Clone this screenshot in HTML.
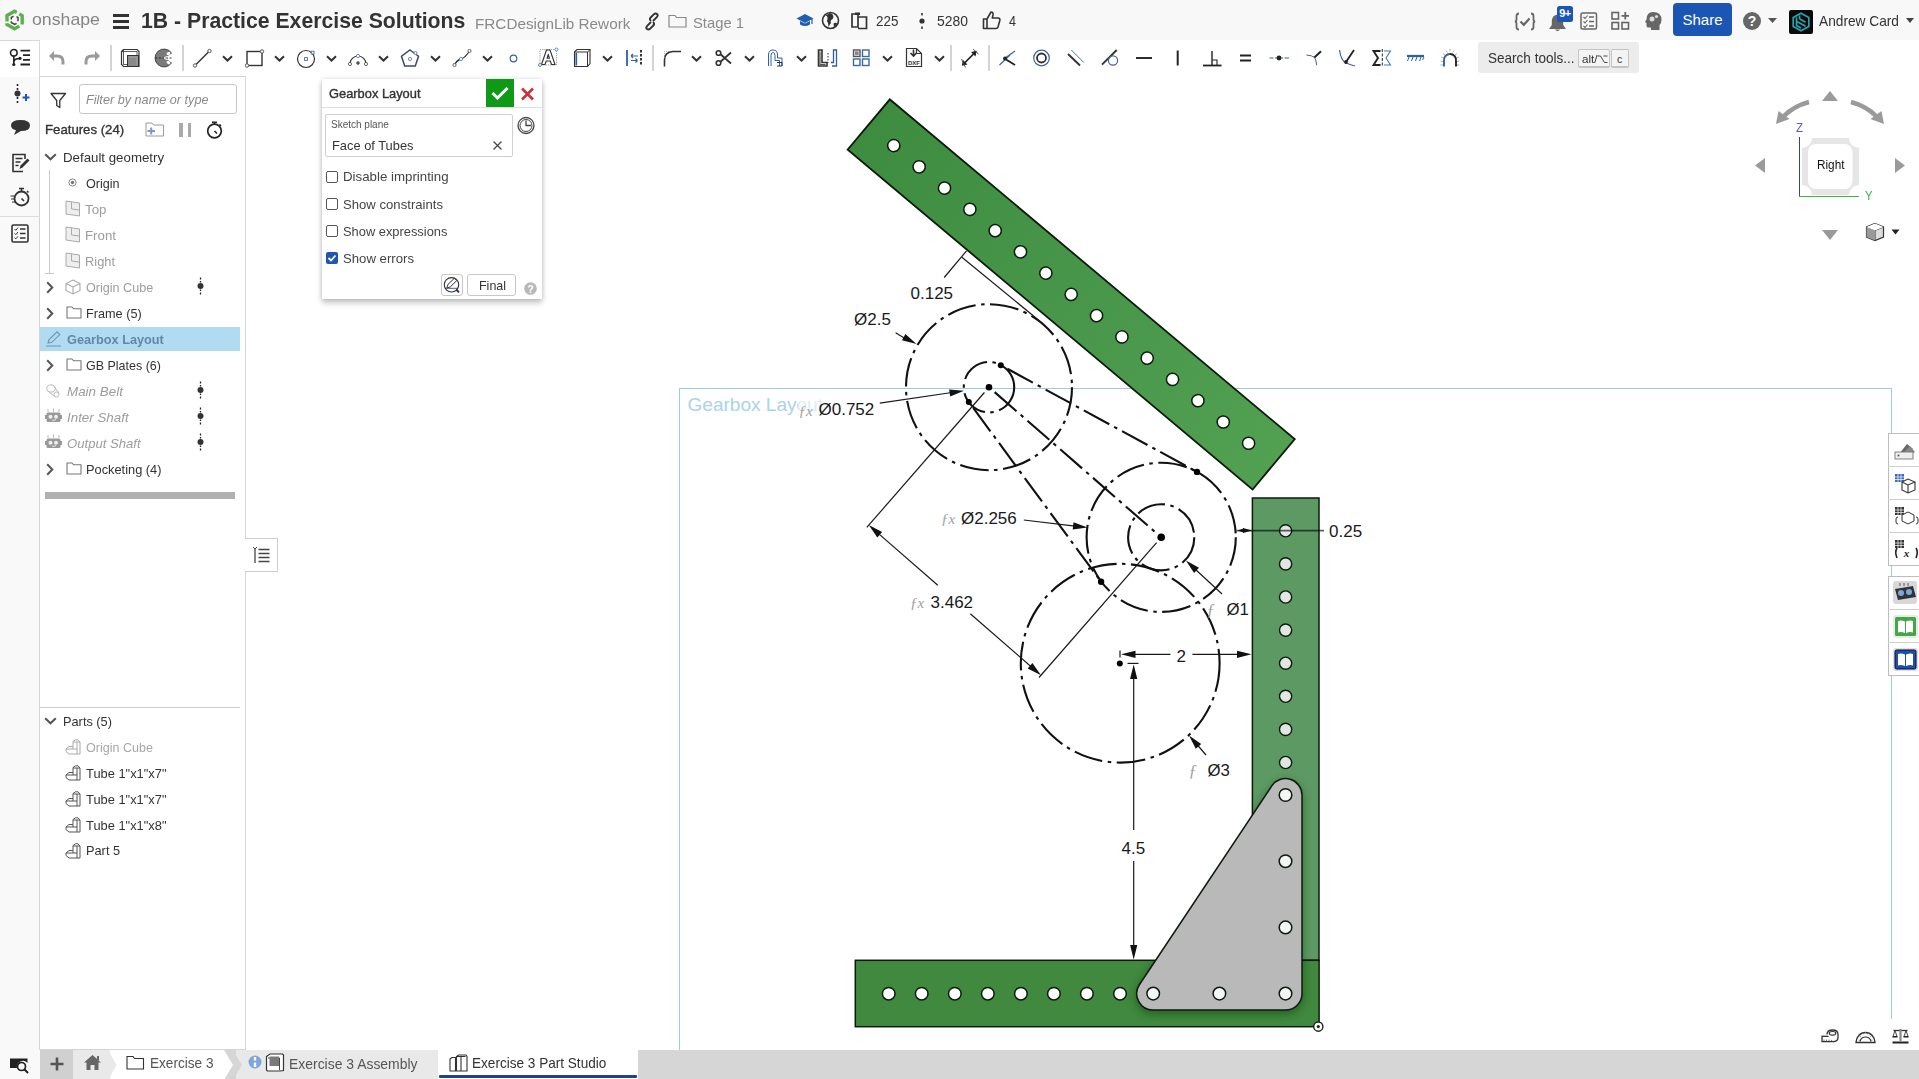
<!DOCTYPE html>
<html><head><meta charset="utf-8">
<style>
html,body{margin:0;padding:0;}
body{width:1919px;height:1079px;overflow:hidden;position:relative;background:#fff;font-family:"Liberation Sans",sans-serif;color:#333;}
.a{position:absolute;}
.t{position:absolute;white-space:nowrap;line-height:1;}
svg{position:absolute;overflow:visible;}
</style></head><body>
<div class="a" style="left:0;top:0;width:1919px;height:40px;background:#f8f8f8;"></div><div class="a" style="left:0;top:39px;width:40px;height:1040px;background:#f9f9f9;"></div><div class="a" style="left:0;top:40px;width:40px;height:37px;background:#fff;border-top:1px solid #d8d8d8;border-right:1px solid #d8d8d8;box-sizing:border-box;"></div><div class="a" style="left:39px;top:76px;width:207px;height:974px;background:#fff;border-left:1px solid #d4d4d4;border-top:1px solid #d4d4d4;border-right:1px solid #d4d4d4;border-bottom:1px solid #d4d4d4;box-sizing:border-box;"></div><div class="a" style="left:40px;top:1050px;width:1879px;height:29px;background:#d6d6d6;"></div><svg style="left:4px;top:8px;" width="22" height="24" viewBox="0 0 22 24"><g fill="none" stroke="#5cb04f" stroke-width="3.4" stroke-linejoin="miter"><path d="M12.8 4.4 L10.6 3.2 L3 7.6 V13.6"/><path d="M15.3 5.9 L18.2 7.6 V16.6"/><path d="M3 15.3 V16.4 L10.6 20.8 L15.3 18.1"/></g><g fill="none" stroke="#444" stroke-width="1.5"><path d="M9.5 8.2 L7.3 9.5 V11.5"/><path d="M12.5 8.6 L14 9.5 V13.3"/><path d="M7.3 13.2 V14.5 L10.6 16.4 L12.6 15.3"/></g></svg><div class="t" style="left:31.5px;top:10.59px;font-size:16.20px;color:#858585;font-weight:normal;font-style:normal;transform:scaleX(1.0940);transform-origin:0 0;">onshape</div><div class="a" style="left:113px;top:14px;width:16px;height:3px;background:#333;"></div><div class="a" style="left:113px;top:20px;width:16px;height:3px;background:#333;"></div><div class="a" style="left:113px;top:26px;width:16px;height:3px;background:#333;"></div><div class="t" style="left:141.0px;top:10.21px;font-size:21.90px;color:#333;font-weight:bold;font-style:normal;transform:scaleX(0.9694);transform-origin:0 0;">1B - Practice Exercise Solutions</div><div class="t" style="left:475.0px;top:15.85px;font-size:15.30px;color:#8a8a8a;font-weight:normal;font-style:normal;transform:scaleX(0.9987);transform-origin:0 0;">FRCDesignLib Rework</div><svg style="left:643px;top:13px;" width="18" height="17" viewBox="0 0 18 17"><g fill="none" stroke="#333" stroke-width="1.9" stroke-linecap="round"><path d="M7.5 9.5 L4.2 12.8 Q2.5 14.5 4 16 Q5.5 17.2 7 15.8 L10.3 12.5 Q11.8 11 10.5 9.5"/><path d="M10.5 7.5 L13.8 4.2 Q15.5 2.5 14 1 Q12.5 -0.2 11 1.2 L7.7 4.5 Q6.2 6 7.5 7.5"/></g></svg><svg style="left:668px;top:13px;" width="19" height="15" viewBox="0 0 19 15"><path d="M1 2.5 H7 L8.5 4.5 H18 V14 H1 Z" fill="none" stroke="#888" stroke-width="1.2"/></svg><div class="t" style="left:692.5px;top:14.90px;font-size:15.00px;color:#8a8a8a;font-weight:normal;font-style:normal;transform:scaleX(0.9863);transform-origin:0 0;">Stage 1</div><svg style="left:796px;top:12px;" width="18" height="16" viewBox="0 0 18 16"><path d="M9 2 L17.5 6.5 L9 11 L0.5 6.5 Z" fill="#1f5fae"/><path d="M4 9 V12.5 Q9 15.5 14 12.5 V9 L9 11.5 Z" fill="#1f5fae"/><path d="M16 7 V12" stroke="#1f5fae" stroke-width="1.2"/></svg><svg style="left:821px;top:11px;" width="19" height="19" viewBox="0 0 19 19"><circle cx="9.5" cy="9.5" r="8" fill="none" stroke="#333" stroke-width="1.6"/><path d="M4.5 4.5 Q7 5 6.5 8 Q5 10 7 12 L7.5 16 Q9 13 10 12 Q9 9.5 11 8.5 Q13 7 12 4 Q11 2.5 9 2 M12.5 12.5 Q14.5 11 16.5 12.5 Q15 15 13 16 Z" fill="#333"/></svg><svg style="left:850px;top:11px;" width="19" height="19" viewBox="0 0 19 19"><path d="M2 3 H8 V16 H2 Z M8 6 H16.5 V17.5 H8" fill="none" stroke="#333" stroke-width="1.7"/><path d="M5 1.5 H10 V4 H5 Z" fill="#333"/></svg><div class="t" style="left:875.5px;top:12.86px;font-size:15.40px;color:#333;font-weight:normal;font-style:normal;transform:scaleX(0.8718);transform-origin:0 0;">225</div><svg style="left:918px;top:12px;" width="8" height="18" viewBox="0 0 8 18"><circle cx="4" cy="9" r="2.6" fill="#333"/><rect x="3.2" y="1" width="1.6" height="2.4" fill="#333"/><rect x="3.2" y="14.5" width="1.6" height="2.4" fill="#333"/></svg><div class="t" style="left:937.3px;top:12.86px;font-size:15.40px;color:#333;font-weight:normal;font-style:normal;transform:scaleX(0.9048);transform-origin:0 0;">5280</div><svg style="left:982px;top:10px;" width="19" height="20" viewBox="0 0 19 20"><path d="M1.5 9 H5 V18.5 H1.5 Z M5 9 L9 2 Q11.5 2 11 5 L10.3 8 H16.5 Q18.3 8.5 17.8 10.5 L16 17 Q15.5 18.5 14 18.5 H5" fill="none" stroke="#333" stroke-width="1.6" stroke-linejoin="round"/></svg><div class="t" style="left:1008.8px;top:12.86px;font-size:15.40px;color:#333;font-weight:normal;font-style:normal;transform:scaleX(0.8173);transform-origin:0 0;">4</div><svg style="left:1514px;top:12px;" width="22" height="19" viewBox="0 0 22 19"><path d="M5 1.5 Q2.5 1.5 2.5 4 V7.5 Q2.5 9.5 0.8 9.5 Q2.5 9.5 2.5 11.5 V15 Q2.5 17.5 5 17.5 M17 1.5 Q19.5 1.5 19.5 4 V7.5 Q19.5 9.5 21.2 9.5 Q19.5 9.5 19.5 11.5 V15 Q19.5 17.5 17 17.5" fill="none" stroke="#666" stroke-width="1.8"/><path d="M6.5 9.5 L9.8 12.8 L15.5 6.5" fill="none" stroke="#666" stroke-width="2.2"/></svg><svg style="left:1548px;top:13px;" width="19" height="18" viewBox="0 0 19 18"><path d="M9.5 1.5 Q4 2 3.8 8.5 V12 L1 16 H18 L15.2 12 V8.5 Q15 2 9.5 1.5 Z M7 16.5 Q9.5 19.5 12 16.5 Z" fill="#666"/></svg><div class="a" style="left:1557px;top:6px;width:16px;height:16px;background:#1b55b5;border-radius:2.5px;color:#fff;font-size:11px;font-weight:bold;text-align:center;line-height:15px;letter-spacing:-0.5px;">9+</div><svg style="left:1580px;top:12px;" width="18" height="18" viewBox="0 0 18 18"><rect x="1" y="1" width="15.5" height="16" rx="1.5" fill="none" stroke="#666" stroke-width="1.5"/><path d="M3.5 5 l1.5 1.5 2.5-3 M3.5 9.5 l1.5 1.5 2.5-3 M3.5 14 l1.5 1.5 2.5-3" fill="none" stroke="#666" stroke-width="1.1"/><path d="M9 5 H14 M9 9.5 H14 M9 14 H14" stroke="#666" stroke-width="1.5"/></svg><svg style="left:1611px;top:11px;" width="20" height="20" viewBox="0 0 20 20"><g fill="none" stroke="#666" stroke-width="1.6"><rect x="1" y="1.5" width="6.5" height="6.5"/><rect x="1" y="11.5" width="6.5" height="6.5"/><rect x="11" y="11.5" width="6.5" height="6.5"/></g><path d="M14.3 1 V8.5 M10.5 4.8 H18" stroke="#666" stroke-width="1.8"/></svg><svg style="left:1644px;top:11px;" width="19" height="20" viewBox="0 0 19 20"><path d="M9 1 Q17.5 1 17.5 9 Q17.5 12 15.5 14 V19 H7 V16.5 H4 Q2.5 16.5 2.5 14.5 V12 L1 11 L2.5 8.5 Q2.5 1 9 1 Z" fill="#666"/><circle cx="8" cy="8" r="2.5" fill="#ddd"/><circle cx="12.5" cy="5.5" r="1.6" fill="#ddd"/></svg><div class="a" style="left:1673px;top:3px;width:59px;height:33px;background:#1c56b4;border-radius:4px;color:#fff;font-size:15px;text-align:center;line-height:33px;">Share</div><svg style="left:1742px;top:11px;" width="20" height="20" viewBox="0 0 20 20"><circle cx="10" cy="10" r="9" fill="#666"/><text x="10" y="15" font-size="14" font-weight="bold" text-anchor="middle" fill="#fff" font-family="Liberation Sans, sans-serif">?</text></svg><svg style="left:1768px;top:18px;" width="9" height="5" viewBox="0 0 9 5"><path d="M0 0 H9 L4.5 5 Z" fill="#555"/></svg><svg style="left:1789px;top:10px;" width="24" height="24" viewBox="0 0 24 24"><rect width="24" height="24" rx="2" fill="#0a0a0a"/><g fill="none" stroke="#2aa3b0" stroke-width="1.7"><path d="M12 3.2 L19.8 7.5 V16.5 L12 20.8 L4.2 16.5 V7.5 Z"/><path d="M7.5 7.2 V15.5 L12 18 M7.5 11.2 L16.5 16.3 M10.5 8.8 L16.5 12.2 M10.5 8.8 V5.5"/></g></svg><div class="t" style="left:1819.0px;top:13.60px;font-size:14.30px;color:#333;font-weight:normal;font-style:normal;transform:scaleX(0.9586);transform-origin:0 0;">Andrew Card</div><svg style="left:1906px;top:17.5px;" width="8" height="5" viewBox="0 0 8 5"><path d="M0 0 H8 L4 5 Z" fill="#444"/></svg><svg style="left:9px;top:48px;" width="22" height="20" viewBox="0 0 22 20"><circle cx="4.8" cy="4.8" r="3.3" fill="none" stroke="#222" stroke-width="1.6"/><path d="M4.8 8 V16.5 M4.8 14 Q5 10.5 11 10.5" fill="none" stroke="#222" stroke-width="1.6"/><circle cx="4.8" cy="16.5" r="1.6" fill="#222"/><circle cx="11" cy="10.3" r="1.6" fill="#222"/><path d="M11.5 2.7 H21 M14 7.2 H21 M14 11.8 H21 M11.5 16.5 H21" stroke="#222" stroke-width="1.8"/></svg><svg style="left:48px;top:49px;" width="17" height="17" viewBox="0 0 17 17"><path d="M6 2 L1 7 L6 12 Z" fill="#9a9a9a"/><path d="M4 7 H9 Q15 7 15 12.5 V15.5" fill="none" stroke="#9a9a9a" stroke-width="3"/></svg><svg style="left:84px;top:49px;" width="17" height="17" viewBox="0 0 17 17"><path d="M11 2 L16 7 L11 12 Z" fill="#9a9a9a"/><path d="M13 7 H8 Q2 7 2 12.5 V15.5" fill="none" stroke="#9a9a9a" stroke-width="3"/></svg><div class="a" style="left:110px;top:45px;width:2px;height:26px;background:#d4d4d4;"></div><svg style="left:120px;top:48px;" width="20" height="20" viewBox="0 0 20 20"><path d="M1.5 3.5 L3.5 1.5 H17 L19 3.5 V18.5 H3.5 L1.5 16.5 Z" fill="#fff" stroke="#333" stroke-width="1.2"/><path d="M3.5 1.5 V16.5 H19 M1.5 3.5 H17 V18.5" fill="none" stroke="#333" stroke-width="0.8"/><rect x="7.5" y="7.5" width="11" height="11" fill="#8a8a8a" stroke="#333" stroke-width="1"/><path d="M9 9 H17 V17" fill="none" stroke="#aaa" stroke-width="0.8"/></svg><svg style="left:154px;top:48px;" width="20" height="20" viewBox="0 0 20 20"><path d="M17.5 5 A9 9 0 1 0 17.5 15 L10 10 Z" fill="#7a7a7a" stroke="#333" stroke-width="0.8"/><ellipse cx="14.5" cy="5.5" rx="2" ry="1.5" fill="#fff" transform="rotate(-35 14.5 5.5)"/><ellipse cx="14.5" cy="14.5" rx="2" ry="1.5" fill="#fff" transform="rotate(35 14.5 14.5)"/><path d="M1.5 10 H19" stroke="#222" stroke-width="0.9" stroke-dasharray="2 1.5"/><path d="M10 10 L13 8 M10 10 L13 12" stroke="#fff" stroke-width="1"/></svg><div class="a" style="left:182px;top:45px;width:2px;height:26px;background:#d4d4d4;"></div><svg style="left:192px;top:48px;" width="20" height="20" viewBox="0 0 20 20"><path d="M3 17.5 L17.5 3" stroke="#333" stroke-width="1.4"/><circle cx="3" cy="17.5" r="1.7" fill="#fff" stroke="#555" stroke-width="1"/><circle cx="17.5" cy="3" r="1.7" fill="#fff" stroke="#555" stroke-width="1"/></svg><svg style="left:222px;top:55px;" width="11" height="7" viewBox="0 0 11 7"><path d="M1 1.2 L5.5 5.5 L10 1.2" fill="none" stroke="#333" stroke-width="2"/></svg><svg style="left:244px;top:48px;" width="20" height="20" viewBox="0 0 20 20"><rect x="3" y="3.5" width="15" height="14" fill="none" stroke="#333" stroke-width="1.4"/><circle cx="3" cy="17.5" r="1.7" fill="#fff" stroke="#555" stroke-width="1"/><circle cx="18" cy="3.5" r="1.7" fill="#fff" stroke="#555" stroke-width="1"/></svg><svg style="left:274px;top:55px;" width="11" height="7" viewBox="0 0 11 7"><path d="M1 1.2 L5.5 5.5 L10 1.2" fill="none" stroke="#333" stroke-width="2"/></svg><svg style="left:296px;top:48px;" width="20" height="20" viewBox="0 0 20 20"><circle cx="10" cy="11" r="8.5" fill="none" stroke="#333" stroke-width="1.2"/><rect x="8.6" y="9.6" width="2.8" height="2.8" fill="none" stroke="#4a6aa0" stroke-width="0.9"/><rect x="15.2" y="3.2" width="2.8" height="2.8" fill="#fff" stroke="#4a6aa0" stroke-width="0.9"/></svg><svg style="left:325.5px;top:55px;" width="11" height="7" viewBox="0 0 11 7"><path d="M1 1.2 L5.5 5.5 L10 1.2" fill="none" stroke="#333" stroke-width="2"/></svg><svg style="left:348px;top:48px;" width="20" height="20" viewBox="0 0 20 20"><path d="M2 16 A8 8 0 0 1 18 16" fill="none" stroke="#333" stroke-width="1.2"/><circle cx="2" cy="16" r="1.6" fill="#fff" stroke="#555" stroke-width="0.9"/><circle cx="18" cy="16" r="1.6" fill="#fff" stroke="#555" stroke-width="0.9"/><circle cx="10" cy="8" r="1.6" fill="#fff" stroke="#6a7aa0" stroke-width="0.9"/><path d="M8 15 H12 M10 13 V17" stroke="#222" stroke-width="1.1"/></svg><svg style="left:378px;top:55px;" width="11" height="7" viewBox="0 0 11 7"><path d="M1 1.2 L5.5 5.5 L10 1.2" fill="none" stroke="#333" stroke-width="2"/></svg><svg style="left:400px;top:48px;" width="20" height="20" viewBox="0 0 20 20"><path d="M10 2 L18.5 8.2 L15.3 18 H4.7 L1.5 8.2 Z" fill="none" stroke="#3a4a6a" stroke-width="1.5"/><circle cx="10" cy="11" r="1.6" fill="none" stroke="#6a7aa0" stroke-width="0.9"/><circle cx="15.5" cy="5" r="1.5" fill="#fff" stroke="#6a7aa0" stroke-width="0.9"/></svg><svg style="left:430px;top:55px;" width="11" height="7" viewBox="0 0 11 7"><path d="M1 1.2 L5.5 5.5 L10 1.2" fill="none" stroke="#333" stroke-width="2"/></svg><svg style="left:452px;top:48px;" width="20" height="20" viewBox="0 0 20 20"><path d="M2.5 17 Q5 12 9 11 Q13 10 17.5 3" fill="none" stroke="#333" stroke-width="1.3"/><circle cx="2.5" cy="17" r="1.6" fill="#fff" stroke="#555" stroke-width="0.9"/><circle cx="9" cy="11" r="1.6" fill="#fff" stroke="#5a7ab0" stroke-width="0.9"/><circle cx="17.5" cy="3" r="1.6" fill="#fff" stroke="#555" stroke-width="0.9"/></svg><svg style="left:482px;top:55px;" width="11" height="7" viewBox="0 0 11 7"><path d="M1 1.2 L5.5 5.5 L10 1.2" fill="none" stroke="#333" stroke-width="2"/></svg><svg style="left:508px;top:53px;" width="11" height="11" viewBox="0 0 11 11"><circle cx="5.5" cy="5.5" r="3.3" fill="none" stroke="#3a62a8" stroke-width="1.2"/></svg><svg style="left:538px;top:47px;" width="21" height="21" viewBox="0 0 21 21"><rect x="2" y="2.5" width="16.5" height="15.5" fill="none" stroke="#777" stroke-width="0.7" stroke-dasharray="1.2 1"/><path d="M3.5 17.5 L8.5 3 H12 L17 17.5 H13.5 L12.3 14 H8.2 L7 17.5 Z M9 11.3 H11.5 L10.25 7.3 Z" fill="#fff" stroke="#333" stroke-width="1.1" stroke-linejoin="round"/><circle cx="2" cy="18" r="1.5" fill="#fff" stroke="#5a7ab0" stroke-width="0.9"/><circle cx="18.5" cy="2.5" r="1.5" fill="#fff" stroke="#5a7ab0" stroke-width="0.9"/></svg><svg style="left:573px;top:48px;" width="19" height="20" viewBox="0 0 19 20"><path d="M1.5 4 L4 1.5 H17 V15.5 L14.5 18.5 H1.5 Z" fill="#fff" stroke="#333" stroke-width="1.1"/><path d="M1.5 4 H14.5 V18.5 M14.5 4 L17 1.5" fill="none" stroke="#333" stroke-width="1"/><path d="M3.3 5 V17.5" stroke="#2f5fa5" stroke-width="1.7"/></svg><svg style="left:601.5px;top:55px;" width="11" height="7" viewBox="0 0 11 7"><path d="M1 1.2 L5.5 5.5 L10 1.2" fill="none" stroke="#333" stroke-width="2"/></svg><svg style="left:625px;top:48px;" width="18" height="20" viewBox="0 0 18 20"><path d="M2 2 V18" stroke="#2f5fa5" stroke-width="1.8"/><path d="M6 8 H13 M6 8 L8 6 M6 8 L8 10 M6 12.5 H12.5 M12.5 12.5 L10.5 10.5 M12.5 12.5 L10.5 14.5" stroke="#2f5fa5" stroke-width="1.1" fill="none"/><path d="M16 2 V18" stroke="#222" stroke-width="1.8" stroke-dasharray="2.5 1.5"/></svg><div class="a" style="left:652px;top:45px;width:2px;height:26px;background:#d4d4d4;"></div><svg style="left:662px;top:48px;" width="20" height="20" viewBox="0 0 20 20"><path d="M2.5 18.5 V12 Q2.5 4 11 3.5 H19" fill="none" stroke="#333" stroke-width="1.6"/><path d="M2.5 10 V3.5 H8" fill="none" stroke="#888" stroke-width="0.7" stroke-dasharray="1 1"/></svg><svg style="left:691px;top:55px;" width="11" height="7" viewBox="0 0 11 7"><path d="M1 1.2 L5.5 5.5 L10 1.2" fill="none" stroke="#333" stroke-width="2"/></svg><svg style="left:715px;top:48px;" width="18" height="20" viewBox="0 0 18 20"><circle cx="3.5" cy="5" r="2.3" fill="none" stroke="#333" stroke-width="1.6"/><circle cx="3.5" cy="15" r="2.3" fill="none" stroke="#333" stroke-width="1.6"/><path d="M5.5 6.3 L16 15.5 M5.5 13.7 L16 4.5" stroke="#333" stroke-width="1.8"/></svg><svg style="left:744px;top:55px;" width="11" height="7" viewBox="0 0 11 7"><path d="M1 1.2 L5.5 5.5 L10 1.2" fill="none" stroke="#333" stroke-width="2"/></svg><svg style="left:767px;top:48px;" width="18" height="20" viewBox="0 0 18 20"><path d="M1.5 18 V7 Q1.5 2 6 2 Q10.5 2 10.5 7 V10 H15 V18" fill="none" stroke="#2f5fa5" stroke-width="1"/><path d="M4 18 V7.5 Q4 4.5 6 4.5 Q8 4.5 8 7.5 V12.5 H12.5 V18" fill="none" stroke="#2f5fa5" stroke-width="1"/><path d="M10 14.5 H15 V18 H10" fill="none" stroke="#333" stroke-width="1"/></svg><svg style="left:795.5px;top:55px;" width="11" height="7" viewBox="0 0 11 7"><path d="M1 1.2 L5.5 5.5 L10 1.2" fill="none" stroke="#333" stroke-width="2"/></svg><svg style="left:817px;top:48px;" width="21" height="20" viewBox="0 0 21 20"><path d="M1.5 2 H5 V14.5 H10 V18 H1.5 Z" fill="none" stroke="#333" stroke-width="1.6"/><path d="M3 3.5 V16.5 H8.5" stroke="#555" stroke-width="1.2" fill="none"/><path d="M11 5 V15" stroke="#333" stroke-width="1" stroke-dasharray="1.5 1.5"/><path d="M15 18 H19.5 V2 H16.5 V14.5 H14" fill="none" stroke="#2f5fa5" stroke-width="1.3"/></svg><svg style="left:852px;top:48px;" width="19" height="20" viewBox="0 0 19 20"><g fill="none" stroke-width="1.4"><rect x="1.5" y="2" width="6.5" height="6.5" stroke="#555"/><rect x="10.5" y="2" width="6.5" height="6.5" stroke="#3a6a9a"/><rect x="1.5" y="11" width="6.5" height="6.5" stroke="#3a6a9a"/><rect x="10.5" y="11" width="6.5" height="6.5" stroke="#3a6a9a"/></g><rect x="2.8" y="3.3" width="3.9" height="3.9" fill="#888"/></svg><svg style="left:881.5px;top:55px;" width="11" height="7" viewBox="0 0 11 7"><path d="M1 1.2 L5.5 5.5 L10 1.2" fill="none" stroke="#333" stroke-width="2"/></svg><svg style="left:905px;top:47px;" width="18" height="21" viewBox="0 0 18 21"><path d="M1.5 1.5 H11.5 L16.5 6.5 V19.5 H1.5 Z M11.5 1.5 V6.5 H16.5" fill="none" stroke="#333" stroke-width="1.2"/><path d="M8.5 2.5 V9 M5.5 6 L8.5 9 L11.5 6" fill="none" stroke="#333" stroke-width="1.6"/><text x="9" y="17.5" font-size="6" font-weight="bold" text-anchor="middle" fill="#333" font-family="Liberation Sans, sans-serif">DXF</text></svg><svg style="left:934px;top:55px;" width="11" height="7" viewBox="0 0 11 7"><path d="M1 1.2 L5.5 5.5 L10 1.2" fill="none" stroke="#333" stroke-width="2"/></svg><div class="a" style="left:950px;top:45px;width:2px;height:26px;background:#d4d4d4;"></div><svg style="left:960px;top:48px;" width="19" height="20" viewBox="0 0 19 20"><path d="M3 16.5 L15.5 4" stroke="#222" stroke-width="1.7"/><path d="M1.8 17.7 L3 12 L7.5 16.5 Z M16.7 2.8 L15.5 8.5 L11 4 Z" fill="#222"/><path d="M1.5 11 L5.5 19.5 M13 1 L18.5 6" stroke="#444" stroke-width="0.9"/></svg><div class="a" style="left:988px;top:45px;width:2px;height:26px;background:#d4d4d4;"></div><svg style="left:998px;top:48px;" width="20" height="20" viewBox="0 0 20 20"><path d="M1.5 17 L12 7 M6.5 10.5 L17 3" stroke="#3a62a8" stroke-width="1.2"/><path d="M6.5 10.5 L17 17" stroke="#222" stroke-width="1.8"/><circle cx="7" cy="10.5" r="1.9" fill="#222"/></svg><svg style="left:1032px;top:48px;" width="19" height="20" viewBox="0 0 19 20"><circle cx="9.5" cy="10" r="7.8" fill="none" stroke="#3a62a8" stroke-width="1.2"/><circle cx="9.5" cy="10" r="4.5" fill="none" stroke="#333" stroke-width="1.8"/></svg><svg style="left:1066px;top:48px;" width="19" height="20" viewBox="0 0 19 20"><path d="M5.3 2 L17.8 14.5" stroke="#3a62a8" stroke-width="0.9"/><path d="M2 6 L14 17.5" stroke="#333" stroke-width="1.9"/></svg><svg style="left:1100px;top:48px;" width="20" height="20" viewBox="0 0 20 20"><path d="M2 16.6 L16.7 2" stroke="#333" stroke-width="1.9"/><circle cx="13" cy="12.5" r="4.6" fill="none" stroke="#3a62a8" stroke-width="1.2"/></svg><svg style="left:1135px;top:48px;" width="19" height="20" viewBox="0 0 19 20"><path d="M1 10 H17" stroke="#222" stroke-width="1.9"/></svg><svg style="left:1170px;top:48px;" width="15" height="20" viewBox="0 0 15 20"><path d="M7.7 2.5 V17.5" stroke="#222" stroke-width="2"/></svg><svg style="left:1202px;top:48px;" width="20" height="20" viewBox="0 0 20 20"><path d="M1 17.5 H19.5" stroke="#222" stroke-width="1.8"/><path d="M10 3 V17.5" stroke="#222" stroke-width="1.4"/><path d="M10 12 H15 V17.5" fill="none" stroke="#222" stroke-width="1.1"/></svg><svg style="left:1238px;top:48px;" width="15" height="20" viewBox="0 0 15 20"><path d="M2 7.5 H13 M2 12.5 H13" stroke="#222" stroke-width="2"/></svg><svg style="left:1269px;top:48px;" width="21" height="20" viewBox="0 0 21 20"><path d="M0.5 10 H4.5 M15.5 10 H20" stroke="#3a62a8" stroke-width="1.2"/><path d="M6 10 H14" stroke="#333" stroke-width="0.8"/><circle cx="10" cy="10" r="2.4" fill="#222"/></svg><svg style="left:1305px;top:48px;" width="18" height="20" viewBox="0 0 18 20"><path d="M1.5 7 Q7 7.5 9.4 9.3 Q11 11 11.7 17.3" fill="none" stroke="#4a5ab0" stroke-width="1"/><path d="M9.4 9.5 L16 3.3" stroke="#222" stroke-width="2"/></svg><svg style="left:1338px;top:48px;" width="19" height="20" viewBox="0 0 19 20"><path d="M1.5 2 Q3 13 8 15 Q13 17 17 18" fill="none" stroke="#3a62a8" stroke-width="1.2"/><path d="M8 14 L16 2" stroke="#222" stroke-width="1.8"/><circle cx="8" cy="14" r="1.9" fill="#222"/></svg><svg style="left:1372px;top:48px;" width="20" height="20" viewBox="0 0 20 20"><path d="M8.5 3 H1.5 L6 10 L1.5 17 H8.5" fill="none" stroke="#222" stroke-width="1.9"/><path d="M12 3 H18.5 L14 10 L18.5 17 H12" fill="none" stroke="#3a7ac0" stroke-width="1.1"/><path d="M10.3 1 V19" stroke="#222" stroke-width="1" stroke-dasharray="3 1.5"/></svg><svg style="left:1406px;top:48px;" width="19" height="20" viewBox="0 0 19 20"><path d="M1 8 H18" stroke="#2f5fa5" stroke-width="2.2"/><path d="M3 9 L1.5 13 M7 9 L5.5 13 M11 9 L9.5 13 M15 9 L13.5 13 M18 9 L16.5 12" stroke="#2f5fa5" stroke-width="1"/></svg><svg style="left:1440px;top:47px;" width="20" height="21" viewBox="0 0 20 21"><g stroke="#999" stroke-width="0.8"><path d="M0.5 18 H3 M0.5 14 L3 14.5 M1.2 10 L3.6 11 M3 6.5 L5 8 M6 3.5 L7.3 5.5 M10 2 V4.5 M14 3.5 L12.7 5.5 M17 6.5 L15 8 M18.8 10 L16.4 11 M19.5 14 L17 14.5 M19.5 18 H17"/></g><path d="M4 19.5 V14 A6 6 0 0 1 10 7" fill="none" stroke="#2f5fa5" stroke-width="1.9"/><path d="M10 7 A6 6 0 0 1 16 14 V19.5" fill="none" stroke="#222" stroke-width="1.9"/></svg><div class="a" style="left:1478px;top:42px;width:161px;height:31px;background:#ececec;border-radius:3px;"></div><div class="t" style="left:1488.0px;top:51.20px;font-size:14.30px;color:#333;font-weight:normal;font-style:normal;transform:scaleX(0.9463);transform-origin:0 0;">Search tools...</div><div class="a" style="left:1578px;top:49px;width:32px;height:19px;background:#f4f4f4;border:1px solid #c4c4c4;border-bottom-width:2px;border-radius:2px;box-sizing:border-box;"></div><div class="t" style="left:1581.5px;top:53.61px;font-size:10.50px;color:#333;font-weight:normal;font-style:normal;transform:scaleX(1.1066);transform-origin:0 0;">alt/</div><svg style="left:1597px;top:54px;" width="11" height="10" viewBox="0 0 11 10"><path d="M0.5 2 H3.5 L7.5 8.5 H10.5 M6.5 2 H10.5" fill="none" stroke="#333" stroke-width="0.9"/></svg><div class="a" style="left:1611px;top:49px;width:18px;height:19px;background:#f4f4f4;border:1px solid #c4c4c4;border-bottom-width:2px;border-radius:2px;box-sizing:border-box;"></div><div class="t" style="left:1617.0px;top:53.61px;font-size:10.50px;color:#333;font-weight:normal;font-style:normal;">c</div><svg style="left:12px;top:83px;" width="18" height="20" viewBox="0 0 18 20"><path d="M5.5 1 V3 M5.5 5 V7 M5.5 14 V16 M5.5 18 V20" stroke="#222" stroke-width="1.6"/><circle cx="5.5" cy="10.5" r="3" fill="#333"/><path d="M10.5 14.5 H17.5 M14 11 V18" stroke="#1f56b5" stroke-width="2"/></svg><svg style="left:10px;top:119px;" width="21" height="17" viewBox="0 0 21 17"><path d="M10.5 1 Q20 1 20 6.5 Q20 12 11 12 L4 16 L6 11.3 Q1 10 1 6.5 Q1 1 10.5 1 Z" fill="#333"/></svg><svg style="left:11px;top:153px;" width="19" height="20" viewBox="0 0 19 20"><path d="M12 18.5 H2 V1.5 H14 V6" fill="none" stroke="#333" stroke-width="1.6"/><path d="M4.5 5.5 H11.5 M4.5 9 H9.5 M4.5 12.5 H7.5" stroke="#333" stroke-width="1.4"/><path d="M8.5 16 L9.5 12.5 L16.5 5.5 L18.5 7.5 L11.5 14.5 Z" fill="#333"/></svg><svg style="left:10px;top:187px;" width="20" height="20" viewBox="0 0 20 20"><circle cx="11.5" cy="11.5" r="7" fill="none" stroke="#333" stroke-width="1.8"/><path d="M9 1.5 H14 M11.5 1.5 V4.5 M11.5 11.5 L14 14" stroke="#333" stroke-width="1.6"/><path d="M17 4 L18.5 5.5" stroke="#333" stroke-width="1.6"/><path d="M0.5 9 H4 M1 12 H4 M2 15 H5" stroke="#333" stroke-width="1"/></svg><div class="a" style="left:0;top:216px;width:40px;height:1px;background:#dcdcdc;"></div><svg style="left:11px;top:224px;" width="18" height="19" viewBox="0 0 18 19"><rect x="1" y="1" width="16" height="17" rx="1.5" fill="none" stroke="#333" stroke-width="1.6"/><path d="M3.5 5 l1.3 1.3 2.2-2.6 M3.5 9.3 l1.3 1.3 2.2-2.6 M3.5 13.6 l1.3 1.3 2.2-2.6" fill="none" stroke="#333" stroke-width="1"/><path d="M9 5 H14.5 M9 9.5 H14.5 M9 14 H14.5" stroke="#333" stroke-width="1.7"/></svg><svg style="left:9px;top:1057px;" width="21" height="17" viewBox="0 0 21 17"><path d="M1 2 H17 V7" fill="none" stroke="#222" stroke-width="0"/><path d="M1 1.5 H18.5 V6 A6 6 0 0 0 8 11 H1 Z" fill="#222"/><circle cx="12.5" cy="9.5" r="4" fill="none" stroke="#222" stroke-width="1.7"/><path d="M15.3 12.3 L19 16" stroke="#222" stroke-width="2"/></svg><svg style="left:50px;top:92px;" width="17" height="17" viewBox="0 0 17 17"><path d="M1 1.5 H15.5 L9.8 8.5 V15.5 L6.7 13.5 V8.5 Z" fill="none" stroke="#333" stroke-width="1.3" stroke-linejoin="round"/></svg><div class="a" style="left:79px;top:84px;width:158px;height:30px;border:1px solid #c8c8c8;border-radius:3px;box-sizing:border-box;background:#fff;"></div><div class="t" style="left:86.3px;top:93.24px;font-size:13.30px;color:#8a8a8a;font-weight:normal;font-style:italic;transform:scaleX(0.9524);transform-origin:0 0;">Filter by name or type</div><div class="t" style="left:44.7px;top:123.46px;font-size:13.40px;color:#333;font-weight:normal;font-style:normal;transform:scaleX(0.9846);transform-origin:0 0;-webkit-text-stroke:0.35px #333;">Features (24)</div><svg style="left:145px;top:122px;" width="20" height="15" viewBox="0 0 20 15"><path d="M1 1 H7 L8.5 3 H18.5 V14 H1 Z" fill="none" stroke="#9a9a9a" stroke-width="1"/><path d="M2.5 9 H10 M6.2 5.5 V12.5" stroke="#7f95d0" stroke-width="2"/></svg><div class="a" style="left:179px;top:123px;width:3.5px;height:14px;background:#aaa;"></div><div class="a" style="left:187.5px;top:123px;width:3.5px;height:14px;background:#aaa;"></div><svg style="left:206px;top:121px;" width="17" height="18" viewBox="0 0 17 18"><circle cx="8.5" cy="10" r="6.8" fill="none" stroke="#222" stroke-width="1.7"/><path d="M6 1.2 H11 M8.5 1.2 V3.2 M8.5 10 L11 12.5 M13.5 3.5 L15 5" stroke="#222" stroke-width="1.5"/></svg><svg style="left:44px;top:153px;" width="13" height="8" viewBox="0 0 13 8"><path d="M1.2 1.2 L6.5 6.3 L11.8 1.2" fill="none" stroke="#555" stroke-width="2"/></svg><div class="t" style="left:63.4px;top:150.81px;font-size:13.10px;color:#333;font-weight:normal;font-style:normal;transform:scaleX(1.0135);transform-origin:0 0;">Default geometry</div><div class="a" style="left:49px;top:170px;width:1px;height:103px;background:#c8c8c8;"></div><div class="a" style="left:45px;top:273px;width:9px;height:1px;background:#c8c8c8;"></div><svg style="left:68px;top:178px;" width="9" height="9" viewBox="0 0 9 9"><circle cx="4.5" cy="4.5" r="3.6" fill="none" stroke="#777" stroke-width="0.9"/><circle cx="4.5" cy="4.5" r="1.7" fill="#777"/></svg><div class="t" style="left:85.6px;top:176.71px;font-size:13.10px;color:#333;font-weight:normal;font-style:normal;transform:scaleX(0.9615);transform-origin:0 0;">Origin</div><svg style="left:65px;top:200.3px;" width="16" height="17" viewBox="0 0 16 17"><path d="M1 1 L14.5 3 V16 L1 14 Z" fill="#eee" stroke="#aaa" stroke-width="1"/><path d="M6.5 2 V9 L14.5 10" fill="none" stroke="#aaa" stroke-width="1"/></svg><div class="t" style="left:85.4px;top:202.71px;font-size:13.10px;color:#9d9d9d;font-weight:normal;font-style:normal;transform:scaleX(1.0132);transform-origin:0 0;">Top</div><svg style="left:65px;top:226.3px;" width="16" height="17" viewBox="0 0 16 17"><path d="M1 1 L14.5 3 V16 L1 14 Z" fill="#eee" stroke="#aaa" stroke-width="1"/><path d="M6.5 2 V9 L14.5 10" fill="none" stroke="#aaa" stroke-width="1"/></svg><div class="t" style="left:85.4px;top:228.71px;font-size:13.10px;color:#9d9d9d;font-weight:normal;font-style:normal;transform:scaleX(1.0139);transform-origin:0 0;">Front</div><svg style="left:65px;top:252.39999999999998px;" width="16" height="17" viewBox="0 0 16 17"><path d="M1 1 L14.5 3 V16 L1 14 Z" fill="#eee" stroke="#aaa" stroke-width="1"/><path d="M6.5 2 V9 L14.5 10" fill="none" stroke="#aaa" stroke-width="1"/></svg><div class="t" style="left:85.4px;top:254.81px;font-size:13.10px;color:#9d9d9d;font-weight:normal;font-style:normal;transform:scaleX(0.9810);transform-origin:0 0;">Right</div><svg style="left:46px;top:281px;" width="8" height="13" viewBox="0 0 8 13"><path d="M1.2 1.2 L6.3 6.5 L1.2 11.8" fill="none" stroke="#555" stroke-width="2"/></svg><svg style="left:65px;top:279px;" width="16" height="16" viewBox="0 0 16 16"><path d="M8 1 L15 4.5 V11.5 L8 15 L1 11.5 V4.5 Z M1 4.5 L8 8 L15 4.5 M8 8 V15" fill="none" stroke="#aaa" stroke-width="1.1"/></svg><div class="t" style="left:86.4px;top:280.71px;font-size:13.10px;color:#9d9d9d;font-weight:normal;font-style:normal;transform:scaleX(0.9613);transform-origin:0 0;">Origin Cube</div><svg style="left:196.5px;top:277px;" width="7" height="18" viewBox="0 0 7 18"><path d="M3.5 0.5 V2.5 M3.5 4 V5.5 M3.5 12.5 V14 M3.5 15.5 V17.5" stroke="#222" stroke-width="1.3"/><circle cx="3.5" cy="9" r="3" fill="#333"/></svg><svg style="left:46px;top:307px;" width="8" height="13" viewBox="0 0 8 13"><path d="M1.2 1.2 L6.3 6.5 L1.2 11.8" fill="none" stroke="#555" stroke-width="2"/></svg><svg style="left:65.5px;top:306px;" width="16" height="13" viewBox="0 0 16 13"><path d="M1 1 H6 L7.5 2.8 H15 V12 H1 Z" fill="none" stroke="#777" stroke-width="1.1"/></svg><div class="t" style="left:86.4px;top:306.71px;font-size:13.10px;color:#333;font-weight:normal;font-style:normal;transform:scaleX(0.9687);transform-origin:0 0;">Frame (5)</div><div class="a" style="left:40px;top:327px;width:200px;height:24px;background:#b1dbf1;"></div><svg style="left:45px;top:331px;" width="17" height="16" viewBox="0 0 17 16"><path d="M3 12 L4 8.5 L12 0.8 L14.8 3.6 L6.8 11.3 Z M1 15 H16" fill="none" stroke="#6b97b3" stroke-width="1.1"/></svg><div class="t" style="left:66.6px;top:332.81px;font-size:13.10px;color:#5d8aa6;font-weight:bold;font-style:normal;transform:scaleX(0.9716);transform-origin:0 0;">Gearbox Layout</div><svg style="left:46px;top:359px;" width="8" height="13" viewBox="0 0 8 13"><path d="M1.2 1.2 L6.3 6.5 L1.2 11.8" fill="none" stroke="#555" stroke-width="2"/></svg><svg style="left:65.5px;top:358px;" width="16" height="13" viewBox="0 0 16 13"><path d="M1 1 H6 L7.5 2.8 H15 V12 H1 Z" fill="none" stroke="#777" stroke-width="1.1"/></svg><div class="t" style="left:86.4px;top:358.61px;font-size:13.10px;color:#333;font-weight:normal;font-style:normal;transform:scaleX(0.9539);transform-origin:0 0;">GB Plates (6)</div><svg style="left:46px;top:384px;" width="14" height="14" viewBox="0 0 14 14"><ellipse cx="5" cy="4.5" rx="4.2" ry="3.6" fill="none" stroke="#bbb" stroke-width="1"/><circle cx="10.5" cy="10.5" r="2.5" fill="none" stroke="#bbb" stroke-width="1"/><path d="M2 7 L8.5 12.5 M8 2.5 L12.5 8.5" stroke="#bbb" stroke-width="1"/></svg><div class="t" style="left:66.9px;top:384.61px;font-size:13.10px;color:#9d9d9d;font-weight:normal;font-style:italic;transform:scaleX(1.0236);transform-origin:0 0;">Main Belt</div><svg style="left:196.5px;top:381px;" width="7" height="18" viewBox="0 0 7 18"><path d="M3.5 0.5 V2.5 M3.5 4 V5.5 M3.5 12.5 V14 M3.5 15.5 V17.5" stroke="#222" stroke-width="1.3"/><circle cx="3.5" cy="9" r="3" fill="#333"/></svg><svg style="left:45px;top:408px;" width="17" height="16" viewBox="0 0 17 16"><path d="M3 4 V1 M8.5 4 V0.5 M14 4 V1" stroke="#aaa" stroke-width="0.8"/><rect x="1.5" y="4.5" width="14" height="9.5" rx="1.5" fill="#999"/><rect x="0" y="7" width="2" height="4" fill="#999"/><rect x="15" y="7" width="2" height="4" fill="#999"/><circle cx="5.5" cy="8.7" r="2" fill="#eee"/><circle cx="11" cy="8.7" r="2" fill="#eee"/><path d="M7 12 Q9 13 11 11.5" stroke="#eee" stroke-width="0.9" fill="none"/></svg><div class="t" style="left:66.9px;top:410.71px;font-size:13.10px;color:#9d9d9d;font-weight:normal;font-style:italic;transform:scaleX(1.0208);transform-origin:0 0;">Inter Shaft</div><svg style="left:196.5px;top:407px;" width="7" height="18" viewBox="0 0 7 18"><path d="M3.5 0.5 V2.5 M3.5 4 V5.5 M3.5 12.5 V14 M3.5 15.5 V17.5" stroke="#222" stroke-width="1.3"/><circle cx="3.5" cy="9" r="3" fill="#333"/></svg><svg style="left:45px;top:434px;" width="17" height="16" viewBox="0 0 17 16"><path d="M3 4 V1 M8.5 4 V0.5 M14 4 V1" stroke="#aaa" stroke-width="0.8"/><rect x="1.5" y="4.5" width="14" height="9.5" rx="1.5" fill="#999"/><rect x="0" y="7" width="2" height="4" fill="#999"/><rect x="15" y="7" width="2" height="4" fill="#999"/><circle cx="5.5" cy="8.7" r="2" fill="#eee"/><circle cx="11" cy="8.7" r="2" fill="#eee"/><path d="M7 12 Q9 13 11 11.5" stroke="#eee" stroke-width="0.9" fill="none"/></svg><div class="t" style="left:67.3px;top:436.71px;font-size:13.10px;color:#9d9d9d;font-weight:normal;font-style:italic;transform:scaleX(1.0020);transform-origin:0 0;">Output Shaft</div><svg style="left:196.5px;top:433px;" width="7" height="18" viewBox="0 0 7 18"><path d="M3.5 0.5 V2.5 M3.5 4 V5.5 M3.5 12.5 V14 M3.5 15.5 V17.5" stroke="#222" stroke-width="1.3"/><circle cx="3.5" cy="9" r="3" fill="#333"/></svg><svg style="left:46px;top:463px;" width="8" height="13" viewBox="0 0 8 13"><path d="M1.2 1.2 L6.3 6.5 L1.2 11.8" fill="none" stroke="#555" stroke-width="2"/></svg><svg style="left:65.5px;top:462px;" width="16" height="13" viewBox="0 0 16 13"><path d="M1 1 H6 L7.5 2.8 H15 V12 H1 Z" fill="none" stroke="#777" stroke-width="1.1"/></svg><div class="t" style="left:86.4px;top:462.51px;font-size:13.10px;color:#333;font-weight:normal;font-style:normal;transform:scaleX(0.9782);transform-origin:0 0;">Pocketing (4)</div><div class="a" style="left:45px;top:492px;width:190px;height:7px;background:#b0b0b0;"></div><div class="a" style="left:40px;top:707px;width:200px;height:1px;background:#cfcfcf;"></div><svg style="left:44px;top:717px;" width="13" height="8" viewBox="0 0 13 8"><path d="M1.2 1.2 L6.5 6.3 L11.8 1.2" fill="none" stroke="#555" stroke-width="2"/></svg><div class="t" style="left:63.4px;top:714.51px;font-size:13.10px;color:#333;font-weight:normal;font-style:normal;transform:scaleX(0.9756);transform-origin:0 0;">Parts (5)</div><svg style="left:64.5px;top:739.1px;" width="16" height="16" viewBox="0 0 16 16"><path d="M1 10 L4 7.5 H8 V2.5 L10.5 0.8 H13 L15 3 V15 H4 L1 12.5 Z M1 10 H12 V15 M12 10 V3 L15 3 M8 7.5 V10 M12 3 H8" fill="none" stroke="#aaa" stroke-width="1"/></svg><div class="t" style="left:85.6px;top:740.51px;font-size:13.10px;color:#a8a8a8;font-weight:normal;font-style:normal;transform:scaleX(0.9570);transform-origin:0 0;">Origin Cube</div><svg style="left:64.5px;top:765.1px;" width="16" height="16" viewBox="0 0 16 16"><path d="M1 10 L4 7.5 H8 V2.5 L10.5 0.8 H13 L15 3 V15 H4 L1 12.5 Z M1 10 H12 V15 M12 10 V3 L15 3 M8 7.5 V10 M12 3 H8" fill="none" stroke="#555" stroke-width="1"/></svg><div class="t" style="left:85.6px;top:766.51px;font-size:13.10px;color:#333;font-weight:normal;font-style:normal;transform:scaleX(0.9826);transform-origin:0 0;">Tube 1&quot;x1&quot;x7&quot;</div><svg style="left:64.5px;top:791.3px;" width="16" height="16" viewBox="0 0 16 16"><path d="M1 10 L4 7.5 H8 V2.5 L10.5 0.8 H13 L15 3 V15 H4 L1 12.5 Z M1 10 H12 V15 M12 10 V3 L15 3 M8 7.5 V10 M12 3 H8" fill="none" stroke="#555" stroke-width="1"/></svg><div class="t" style="left:85.6px;top:792.71px;font-size:13.10px;color:#333;font-weight:normal;font-style:normal;transform:scaleX(0.9826);transform-origin:0 0;">Tube 1&quot;x1&quot;x7&quot;</div><svg style="left:64.5px;top:817.3px;" width="16" height="16" viewBox="0 0 16 16"><path d="M1 10 L4 7.5 H8 V2.5 L10.5 0.8 H13 L15 3 V15 H4 L1 12.5 Z M1 10 H12 V15 M12 10 V3 L15 3 M8 7.5 V10 M12 3 H8" fill="none" stroke="#555" stroke-width="1"/></svg><div class="t" style="left:85.6px;top:818.71px;font-size:13.10px;color:#333;font-weight:normal;font-style:normal;transform:scaleX(0.9826);transform-origin:0 0;">Tube 1&quot;x1&quot;x8&quot;</div><svg style="left:64.5px;top:843.0px;" width="16" height="16" viewBox="0 0 16 16"><path d="M1 10 L4 7.5 H8 V2.5 L10.5 0.8 H13 L15 3 V15 H4 L1 12.5 Z M1 10 H12 V15 M12 10 V3 L15 3 M8 7.5 V10 M12 3 H8" fill="none" stroke="#555" stroke-width="1"/></svg><div class="t" style="left:85.6px;top:844.41px;font-size:13.10px;color:#333;font-weight:normal;font-style:normal;transform:scaleX(0.9756);transform-origin:0 0;">Part 5</div><div class="a" style="left:245px;top:538px;width:33px;height:34px;background:#fff;border:1px solid #cfcfcf;border-left:none;box-sizing:border-box;"></div><svg style="left:251px;top:546px;" width="20" height="18" viewBox="0 0 20 18"><path d="M2 1 L4 3 L6 1" fill="none" stroke="#444" stroke-width="1"/><path d="M4 3 V17" stroke="#444" stroke-width="1.3"/><path d="M7.5 3.5 H18.5 M7.5 7.5 H18.5 M7.5 11.5 H18.5 M7.5 15.5 H18.5" stroke="#444" stroke-width="1.3"/></svg><svg width="1919" height="1079" viewBox="0 0 1919 1079" style="left:0;top:0;"><defs>
<linearGradient id="gd" gradientUnits="userSpaceOnUse" x1="-264" y1="0" x2="264" y2="0"><stop offset="0" stop-color="#3d8c40"/><stop offset="1" stop-color="#52a052"/></linearGradient>
<filter id="blur4" x="-20%" y="-20%" width="140%" height="140%"><feGaussianBlur stdDeviation="5"/></filter>
<clipPath id="barsclip"><rect x="855.3" y="960.3" width="463.8" height="66.4"/><rect x="1252.4" y="498" width="66.6" height="462.3"/></clipPath>
</defs><path d="M679.5 1050 V388.5 H1891.5 V1050" fill="none" stroke="#9fcbe3" stroke-width="1.1"/><text x="687.5" y="410.8" font-size="17.8" fill="#a9d3ec" font-family="Liberation Sans, sans-serif" textLength="135.5" lengthAdjust="spacingAndGlyphs">Gearbox Layout</text><g transform="translate(1071.2 294.4) rotate(40)"><rect x="-264.3" y="-32.8" width="528.6" height="65.6" fill="url(#gd)" stroke="#0d1a0d" stroke-width="1.8"/><circle cx="-231.6" cy="0" r="6.1" fill="#fff" stroke="#0d1a0d" stroke-width="1.5"/><circle cx="-198.5" cy="0" r="6.1" fill="#fff" stroke="#0d1a0d" stroke-width="1.5"/><circle cx="-165.4" cy="0" r="6.1" fill="#fff" stroke="#0d1a0d" stroke-width="1.5"/><circle cx="-132.3" cy="0" r="6.1" fill="#fff" stroke="#0d1a0d" stroke-width="1.5"/><circle cx="-99.2" cy="0" r="6.1" fill="#fff" stroke="#0d1a0d" stroke-width="1.5"/><circle cx="-66.2" cy="0" r="6.1" fill="#fff" stroke="#0d1a0d" stroke-width="1.5"/><circle cx="-33.1" cy="0" r="6.1" fill="#fff" stroke="#0d1a0d" stroke-width="1.5"/><circle cx="0" cy="0" r="6.1" fill="#fff" stroke="#0d1a0d" stroke-width="1.5"/><circle cx="33.1" cy="0" r="6.1" fill="#fff" stroke="#0d1a0d" stroke-width="1.5"/><circle cx="66.2" cy="0" r="6.1" fill="#fff" stroke="#0d1a0d" stroke-width="1.5"/><circle cx="99.2" cy="0" r="6.1" fill="#fff" stroke="#0d1a0d" stroke-width="1.5"/><circle cx="132.3" cy="0" r="6.1" fill="#fff" stroke="#0d1a0d" stroke-width="1.5"/><circle cx="165.4" cy="0" r="6.1" fill="#fff" stroke="#0d1a0d" stroke-width="1.5"/><circle cx="198.5" cy="0" r="6.1" fill="#fff" stroke="#0d1a0d" stroke-width="1.5"/><circle cx="231.6" cy="0" r="6.1" fill="#fff" stroke="#0d1a0d" stroke-width="1.5"/></g><rect x="1252.4" y="498" width="66.6" height="462.3" fill="#5d9a63" stroke="#0d1a0d" stroke-width="1.5"/><circle cx="1285.6" cy="530.8" r="6.1" fill="#e2e5e4" stroke="#0d1a0d" stroke-width="1.4"/><circle cx="1285.6" cy="563.9" r="6.1" fill="#e2e5e4" stroke="#0d1a0d" stroke-width="1.4"/><circle cx="1285.6" cy="597" r="6.1" fill="#e2e5e4" stroke="#0d1a0d" stroke-width="1.4"/><circle cx="1285.6" cy="630.1" r="6.1" fill="#e2e5e4" stroke="#0d1a0d" stroke-width="1.4"/><circle cx="1285.6" cy="663.2" r="6.1" fill="#e2e5e4" stroke="#0d1a0d" stroke-width="1.4"/><circle cx="1285.6" cy="696.3" r="6.1" fill="#e2e5e4" stroke="#0d1a0d" stroke-width="1.4"/><circle cx="1285.6" cy="729.4" r="6.1" fill="#e2e5e4" stroke="#0d1a0d" stroke-width="1.4"/><circle cx="1285.6" cy="762.5" r="6.1" fill="#e2e5e4" stroke="#0d1a0d" stroke-width="1.4"/><rect x="855.3" y="960.3" width="463.8" height="66.4" fill="#40893e" stroke="#0d1a0d" stroke-width="1.5"/><circle cx="888.7" cy="993.7" r="6.3" fill="#fff" stroke="#0d1a0d" stroke-width="1.5"/><circle cx="921.7" cy="993.7" r="6.3" fill="#fff" stroke="#0d1a0d" stroke-width="1.5"/><circle cx="954.8" cy="993.7" r="6.3" fill="#fff" stroke="#0d1a0d" stroke-width="1.5"/><circle cx="987.8" cy="993.7" r="6.3" fill="#fff" stroke="#0d1a0d" stroke-width="1.5"/><circle cx="1020.9" cy="993.7" r="6.3" fill="#fff" stroke="#0d1a0d" stroke-width="1.5"/><circle cx="1053.9" cy="993.7" r="6.3" fill="#fff" stroke="#0d1a0d" stroke-width="1.5"/><circle cx="1086.9" cy="993.7" r="6.3" fill="#fff" stroke="#0d1a0d" stroke-width="1.5"/><circle cx="1120" cy="993.7" r="6.3" fill="#fff" stroke="#0d1a0d" stroke-width="1.5"/><circle cx="1153" cy="993.7" r="6.3" fill="#fff" stroke="#0d1a0d" stroke-width="1.5"/><g clip-path="url(#barsclip)"><path d="M1271.8 785.9 A16.5 16.5 0 0 1 1302 795 L1302 993.6 A16.5 16.5 0 0 1 1285.5 1010.1 L1153.2 1010.1 A16.5 16.5 0 0 1 1139.5 984.5 Z" fill="#0a2a0a" opacity="0.55" filter="url(#blur4)" transform="translate(0 3)"/></g><path d="M1271.8 785.9 A16.5 16.5 0 0 1 1302 795 L1302 993.6 A16.5 16.5 0 0 1 1285.5 1010.1 L1153.2 1010.1 A16.5 16.5 0 0 1 1139.5 984.5 Z" fill="#b9b9b9" stroke="#0d1a0d" stroke-width="1.5"/><circle cx="1285.5" cy="795" r="6.3" fill="#f4f5f5" stroke="#0d1a0d" stroke-width="1.5"/><circle cx="1285.5" cy="861.2" r="6.3" fill="#f4f5f5" stroke="#0d1a0d" stroke-width="1.5"/><circle cx="1285.5" cy="927.4" r="6.3" fill="#f4f5f5" stroke="#0d1a0d" stroke-width="1.5"/><circle cx="1285.5" cy="993.6" r="6.3" fill="#f4f5f5" stroke="#0d1a0d" stroke-width="1.5"/><circle cx="1219.4" cy="993.6" r="6.3" fill="#f4f5f5" stroke="#0d1a0d" stroke-width="1.5"/><circle cx="1153.2" cy="993.6" r="6.3" fill="#f4f5f5" stroke="#0d1a0d" stroke-width="1.5"/><circle cx="1318.3" cy="1026.6" r="4.6" fill="#fff" stroke="#222" stroke-width="1.4"/><circle cx="1318.3" cy="1026.6" r="1.6" fill="#222"/><circle cx="989" cy="387.2" r="83" stroke="#111" stroke-width="2.1" fill="none" stroke-dasharray="29 5.5 3.5 5.5"/><circle cx="989" cy="387.2" r="25.2" stroke="#111" stroke-width="2.1" fill="none" stroke-dasharray="29 5.5 3.5 5.5"/><circle cx="1161.2" cy="537.3" r="74.6" stroke="#111" stroke-width="2.1" fill="none" stroke-dasharray="29 5.5 3.5 5.5"/><circle cx="1161.2" cy="537.3" r="33.1" stroke="#111" stroke-width="2.1" fill="none" stroke-dasharray="29 5.5 3.5 5.5"/><circle cx="1120.2" cy="663.2" r="99.4" stroke="#111" stroke-width="2.1" fill="none" stroke-dasharray="29 5.5 3.5 5.5"/><line x1="1000.8" y1="365.2" x2="1197" y2="471.9" stroke="#111" stroke-width="2.1" fill="none" stroke-dasharray="29 5.5 3.5 5.5" stroke-dashoffset="36"/><line x1="968.8" y1="401.9" x2="1101.1" y2="581.8" stroke="#111" stroke-width="2.1" fill="none" stroke-dasharray="29 5.5 3.5 5.5" stroke-dashoffset="36"/><line x1="989" y1="387.2" x2="1161.2" y2="537.3" stroke="#111" stroke-width="2.1" fill="none" stroke-dasharray="29 5.5 3.5 5.5" stroke-dashoffset="36"/><circle cx="989" cy="387.2" r="3.3" fill="#000"/><circle cx="1161.2" cy="537.3" r="3.8" fill="#000"/><circle cx="1119.8" cy="663.6" r="3" fill="#000"/><circle cx="1000.8" cy="365.2" r="3" fill="#000"/><circle cx="968.8" cy="401.9" r="3" fill="#000"/><circle cx="1197" cy="471.9" r="3.2" fill="#000"/><circle cx="1101.1" cy="581.8" r="3.2" fill="#000"/><line x1="944.2" y1="277.5" x2="966.6" y2="250.8" stroke="#1a1a1a" stroke-width="1.2" fill="none"/><line x1="961.9" y1="257.2" x2="1043" y2="323.8" stroke="#1a1a1a" stroke-width="1.2" fill="none"/><line x1="895.6" y1="332.8" x2="905" y2="338.5" stroke="#1a1a1a" stroke-width="1.2" fill="none"/><path d="M916.5 344 L902 340.3 L905.4 334 Z" fill="#111"/><line x1="879.8" y1="403.2" x2="952" y2="392.5" stroke="#1a1a1a" stroke-width="1.2" fill="none"/><path d="M964 390.8 L950.2 396.5 L949.1 389.4 Z" fill="#111"/><line x1="1023.8" y1="520" x2="1075" y2="526.2" stroke="#1a1a1a" stroke-width="1.2" fill="none"/><path d="M1087.5 527.6 L1072.7 529.5 L1073.5 522.3 Z" fill="#111"/><line x1="1222" y1="594" x2="1195" y2="569" stroke="#1a1a1a" stroke-width="1.2" fill="none"/><path d="M1185.9 560.5 L1199 567.7 L1194.1 573 Z" fill="#111"/><line x1="1206" y1="755" x2="1197" y2="744.5" stroke="#1a1a1a" stroke-width="1.2" fill="none"/><path d="M1189 735.4 L1201.2 744 L1195.8 748.7 Z" fill="#111"/><line x1="1236.5" y1="530.6" x2="1324" y2="530.6" stroke="#000" stroke-opacity="0.62" stroke-width="1.6"/><path d="M1252 530.6 L1243 533.1 L1243 528.1 Z" fill="#111"/><path d="M1237.5 530.6 L1243.5 528.6 L1243.5 532.6 Z" fill="#111"/><line x1="1120" y1="650.5" x2="1120" y2="657.5" stroke="#1a1a1a" stroke-width="1.2" fill="none"/><line x1="1130" y1="654.3" x2="1170.4" y2="654.3" stroke="#1a1a1a" stroke-width="1.2" fill="none"/><line x1="1192.4" y1="654.3" x2="1240" y2="654.3" stroke="#1a1a1a" stroke-width="1.2" fill="none"/><path d="M1121 654.3 L1135.5 650.7 L1135.5 657.9 Z" fill="#111"/><path d="M1251.5 654.3 L1237 657.9 L1237 650.7 Z" fill="#111"/><line x1="1127.5" y1="663.4" x2="1138.5" y2="663.4" stroke="#1a1a1a" stroke-width="1.2" fill="none"/><line x1="1133.7" y1="675" x2="1133.7" y2="830" stroke="#1a1a1a" stroke-width="1.2" fill="none"/><line x1="1133.7" y1="861" x2="1133.7" y2="948" stroke="#1a1a1a" stroke-width="1.2" fill="none"/><path d="M1133.7 664.5 L1137.3 679 L1130.1 679 Z" fill="#111"/><path d="M1133.7 959.6 L1130.1 945.1 L1137.3 945.1 Z" fill="#111"/><line x1="984.4" y1="392.5" x2="866.8" y2="527.4" stroke="#1a1a1a" stroke-width="1.2" fill="none"/><line x1="1156.6" y1="542.6" x2="1039" y2="677.5" stroke="#1a1a1a" stroke-width="1.2" fill="none"/><line x1="874.8" y1="530.4" x2="937.8" y2="585.3" stroke="#1a1a1a" stroke-width="1.2" fill="none"/><line x1="970.3" y1="613.7" x2="1034.9" y2="670" stroke="#1a1a1a" stroke-width="1.2" fill="none"/><path d="M868.8 525.1 L882.1 532 L877.3 537.4 Z" fill="#111"/><path d="M1041 675.2 L1027.7 668.4 L1032.4 663 Z" fill="#111"/><text x="910.5" y="299" font-size="17" font-family="Liberation Sans, sans-serif" fill="#1a1a1a">0.125</text><text x="854" y="324.5" font-size="17" font-family="Liberation Sans, sans-serif" fill="#1a1a1a">Ø2.5</text><rect x="798" y="399" width="80" height="20" fill="#fff" opacity="0.6"/><text x="798.5" y="415.5" font-size="15" font-family="Liberation Serif, serif" font-style="italic" fill="#a0a0a0">ƒx</text><text x="818.5" y="415.3" font-size="17" font-family="Liberation Sans, sans-serif" fill="#1a1a1a">Ø0.752</text><text x="941" y="524" font-size="15" font-family="Liberation Serif, serif" font-style="italic" fill="#a0a0a0">ƒx</text><text x="961" y="524" font-size="17" font-family="Liberation Sans, sans-serif" fill="#1a1a1a">Ø2.256</text><text x="910" y="607.5" font-size="15" font-family="Liberation Serif, serif" font-style="italic" fill="#a0a0a0">ƒx</text><text x="930.5" y="607.5" font-size="17" font-family="Liberation Sans, sans-serif" fill="#1a1a1a">3.462</text><text x="1206.5" y="615" font-size="17" font-family="Liberation Serif, serif" font-style="italic" fill="#a0a0a0">ƒ</text><text x="1226.5" y="615" font-size="16.8" font-family="Liberation Sans, sans-serif" fill="#1a1a1a">Ø1</text><text x="1188.5" y="776" font-size="17" font-family="Liberation Serif, serif" font-style="italic" fill="#a0a0a0">ƒ</text><text x="1207.5" y="776" font-size="16.8" font-family="Liberation Sans, sans-serif" fill="#1a1a1a">Ø3</text><text x="1329" y="537.3" font-size="17" font-family="Liberation Sans, sans-serif" fill="#1a1a1a">0.25</text><text x="1176.5" y="661.5" font-size="17" font-family="Liberation Sans, sans-serif" fill="#1a1a1a">2</text><text x="1121.5" y="853.5" font-size="17" font-family="Liberation Sans, sans-serif" fill="#1a1a1a">4.5</text></svg><div class="a" style="left:322px;top:79px;width:220px;height:220px;background:#fff;box-shadow:0 4px 6px rgba(0,0,0,0.22),0 0 4px rgba(0,0,0,0.14);"></div><div class="t" style="left:328.5px;top:86.57px;font-size:13.50px;color:#333;font-weight:normal;font-style:normal;transform:scaleX(0.9525);transform-origin:0 0;-webkit-text-stroke:0.4px #333;">Gearbox Layout</div><div class="a" style="left:486px;top:79px;width:28px;height:28px;background:#0e9a17;"></div><svg style="left:489px;top:83px;" width="22" height="20" viewBox="0 0 22 20"><path d="M3.5 10 L8.5 15 L18.5 5" fill="none" stroke="#fff" stroke-width="3"/></svg><svg style="left:520px;top:87px;" width="15" height="14" viewBox="0 0 15 14"><path d="M2 1.5 L13 12.5 M13 1.5 L2 12.5" stroke="#c8343c" stroke-width="2.6"/></svg><div class="a" style="left:322px;top:107px;width:220px;height:1px;background:#dedede;"></div><div class="a" style="left:325px;top:113.5px;width:188px;height:43px;border:1px solid #d0d0d0;border-radius:2px;box-sizing:border-box;"></div><div class="t" style="left:331.0px;top:119.84px;font-size:10.00px;color:#555;font-weight:normal;font-style:normal;transform:scaleX(0.9997);transform-origin:0 0;">Sketch plane</div><div class="t" style="left:332.0px;top:138.57px;font-size:13.50px;color:#333;font-weight:normal;font-style:normal;transform:scaleX(0.9527);transform-origin:0 0;">Face of Tubes</div><svg style="left:492px;top:140px;" width="11" height="11" viewBox="0 0 11 11"><path d="M1.5 1.5 L9.5 9.5 M9.5 1.5 L1.5 9.5" stroke="#444" stroke-width="1.2"/></svg><svg style="left:516px;top:116px;" width="20" height="19" viewBox="0 0 20 19"><circle cx="10" cy="9.5" r="8" fill="none" stroke="#444" stroke-width="1.3"/><circle cx="10" cy="9.5" r="6" fill="none" stroke="#444" stroke-width="1"/><path d="M10 4.5 V9.5 H15" fill="none" stroke="#444" stroke-width="1.3"/></svg><div class="a" style="left:326px;top:170.5px;width:12px;height:12px;border:1px solid #555;border-radius:2px;box-sizing:border-box;background:#fff;"></div><div class="t" style="left:342.7px;top:170.07px;font-size:13.50px;color:#444;font-weight:normal;font-style:normal;transform:scaleX(0.9842);transform-origin:0 0;">Disable imprinting</div><div class="a" style="left:326px;top:198px;width:12px;height:12px;border:1px solid #555;border-radius:2px;box-sizing:border-box;background:#fff;"></div><div class="t" style="left:342.7px;top:197.57px;font-size:13.50px;color:#444;font-weight:normal;font-style:normal;transform:scaleX(0.9727);transform-origin:0 0;">Show constraints</div><div class="a" style="left:326px;top:225.2px;width:12px;height:12px;border:1px solid #555;border-radius:2px;box-sizing:border-box;background:#fff;"></div><div class="t" style="left:342.7px;top:224.77px;font-size:13.50px;color:#444;font-weight:normal;font-style:normal;transform:scaleX(0.9529);transform-origin:0 0;">Show expressions</div><div class="a" style="left:326px;top:252.39999999999998px;width:12px;height:12px;background:#1f56b0;border-radius:2px;"></div><svg style="left:326px;top:252.39999999999998px;" width="12" height="12" viewBox="0 0 12 12"><path d="M2.5 6 L5 8.5 L9.5 3.5" fill="none" stroke="#fff" stroke-width="1.8"/></svg><div class="t" style="left:342.7px;top:251.97px;font-size:13.50px;color:#444;font-weight:normal;font-style:normal;transform:scaleX(0.9756);transform-origin:0 0;">Show errors</div><div class="a" style="left:441px;top:274px;width:22px;height:22px;border:1px solid #c8c8c8;border-radius:3px;box-sizing:border-box;"></div><svg style="left:443px;top:276px;" width="18" height="18" viewBox="0 0 18 18"><circle cx="8.5" cy="8.8" r="7.2" fill="none" stroke="#333" stroke-width="1.1"/><path d="M3.8 12.2 L5 8.3 L11.5 2.2 L13.8 4.5 L7.5 10.7 Z" fill="none" stroke="#333" stroke-width="1"/><path d="M3 12.3 H14" stroke="#3a62a8" stroke-width="1"/><path d="M13.2 13.5 L16 16.3" stroke="#333" stroke-width="1.8"/></svg><div class="a" style="left:467px;top:274px;width:49px;height:22px;border:1px solid #c8c8c8;border-radius:3px;box-sizing:border-box;"></div><div class="t" style="left:478.5px;top:278.57px;font-size:13.50px;color:#333;font-weight:normal;font-style:normal;transform:scaleX(0.9227);transform-origin:0 0;">Final</div><svg style="left:524px;top:282px;" width="13" height="13" viewBox="0 0 13 13"><circle cx="6.5" cy="6.5" r="6.3" fill="#b8b8b8"/><text x="6.5" y="10.5" font-size="10" font-weight="bold" text-anchor="middle" fill="#fff" font-family="Liberation Sans, sans-serif">?</text></svg><svg style="left:1820px;top:90px;" width="20" height="12" viewBox="0 0 20 12"><path d="M10 1 L18 11 H2 Z" fill="#9a9a9a"/></svg><svg style="left:1820px;top:229px;" width="20" height="12" viewBox="0 0 20 12"><path d="M10 11 L18 1 H2 Z" fill="#9a9a9a"/></svg><svg style="left:1754px;top:157px;" width="12" height="17" viewBox="0 0 12 17"><path d="M1 8.5 L11 1 V16 Z" fill="#9a9a9a"/></svg><svg style="left:1894px;top:157px;" width="12" height="17" viewBox="0 0 12 17"><path d="M11 8.5 L1 1 V16 Z" fill="#9a9a9a"/></svg><svg style="left:1774px;top:97px;" width="38" height="30" viewBox="0 0 38 30"><path d="M35 5 Q20 9 10 19" fill="none" stroke="#9a9a9a" stroke-width="4.5"/><path d="M2 27 L4.5 14 L15.5 22 Z" fill="#9a9a9a"/></svg><svg style="left:1848px;top:97px;" width="38" height="30" viewBox="0 0 38 30"><path d="M3 5 Q18 9 28 19" fill="none" stroke="#9a9a9a" stroke-width="4.5"/><path d="M36 27 L33.5 14 L22.5 22 Z" fill="#9a9a9a"/></svg><svg style="left:1801.5px;top:137.5px;" width="57" height="57" viewBox="0 0 57 57"><path d="M10 0 H47 A10 10 0 0 0 57 10 V47 A10 10 0 0 0 47 57 H10 A10 10 0 0 0 0 47 V10 A10 10 0 0 0 10 0 Z" fill="#e6e6e6"/><rect x="6" y="6" width="44.5" height="45" rx="8" fill="#fff"/></svg><div class="a" style="left:1798.6px;top:137px;width:1.3px;height:59.5px;background:#3b3bb0;"></div><div class="a" style="left:1798.6px;top:195.5px;width:60px;height:1.4px;background:#3fb83f;"></div><div class="t" style="left:1795.5px;top:121.54px;font-size:12.00px;color:#5a5acd;font-weight:normal;font-style:normal;transform:scaleX(0.9549);transform-origin:0 0;">Z</div><div class="t" style="left:1864.8px;top:189.84px;font-size:12.00px;color:#3db03d;font-weight:normal;font-style:normal;transform:scaleX(0.9370);transform-origin:0 0;">Y</div><div class="t" style="left:1816.5px;top:158.07px;font-size:13.50px;color:#111;font-weight:normal;font-style:normal;transform:scaleX(0.8726);transform-origin:0 0;">Right</div><svg style="left:1865px;top:222px;" width="20" height="20" viewBox="0 0 20 20"><path d="M10 1.5 L18.5 5 V15 L10 18.5 L1.5 15 V5 Z" fill="#ddd" stroke="#333" stroke-width="1.2"/><path d="M1.5 5 L10 8.5 L18.5 5 M10 8.5 V18.5" fill="none" stroke="#333" stroke-width="1"/><path d="M1.5 5 L10 8.5 V18.5 L1.5 15 Z" fill="#999"/><path d="M10 1.5 L18.5 5 L10 8.5 L1.5 5 Z" fill="#fff"/></svg><svg style="left:1891px;top:229px;" width="9" height="6" viewBox="0 0 9 6"><path d="M0.5 0.5 H8.5 L4.5 5.5 Z" fill="#222"/></svg><div class="a" style="left:1888px;top:433px;width:31px;height:133px;background:#fff;border:1px solid #bdbdbd;border-right:none;box-sizing:border-box;"></div><div class="a" style="left:1888px;top:466px;width:31px;height:1px;background:#cfcfcf;"></div><div class="a" style="left:1888px;top:499px;width:31px;height:1px;background:#cfcfcf;"></div><div class="a" style="left:1888px;top:532px;width:31px;height:1px;background:#cfcfcf;"></div><div class="a" style="left:1888px;top:576px;width:31px;height:100px;background:#fff;border:1px solid #bdbdbd;border-right:none;box-sizing:border-box;"></div><div class="a" style="left:1888px;top:609px;width:31px;height:1px;background:#cfcfcf;"></div><div class="a" style="left:1888px;top:642px;width:31px;height:1px;background:#cfcfcf;"></div><svg style="left:1894px;top:441px;" width="25" height="19" viewBox="0 0 25 19"><path d="M2 17 L13 3 L19 8 L8 17 Z" fill="#666"/><path d="M4 17 L16 5 L21 11 L10 17 Z" fill="#888"/><rect x="1" y="11" width="18" height="7" fill="#eee" stroke="#777" stroke-width="0.9"/><circle cx="4.5" cy="14.5" r="1" fill="#555"/></svg><svg style="left:1894px;top:473px;" width="25" height="20" viewBox="0 0 25 20"><rect x="1" y="1" width="9" height="8" fill="#3a6ac0"/><path d="M4 1 V9 M7 1 V9 M1 4 H10 M1 6.5 H10" stroke="#fff" stroke-width="0.7"/><path d="M8 9 L14 6 L21 9 V17 L14 20 L8 17 Z M8 9 L14 12 L21 9 M14 12 V20" fill="#fff" stroke="#333" stroke-width="1.1"/></svg><svg style="left:1894px;top:506px;" width="25" height="20" viewBox="0 0 25 20"><rect x="1" y="1" width="9" height="8" fill="#333"/><path d="M4 1 V9 M7 1 V9 M1 4 H10 M1 6.5 H10" stroke="#fff" stroke-width="0.7"/><path d="M8 9 L14 6 L20 9 V15 L14 18 L8 15 Z" fill="#fff" stroke="#333" stroke-width="1"/><path d="M4 11 Q2 11 2 13 V16 Q2 18 4 18 M22 11 Q24 11 24 13 V16 Q24 18 22 18" fill="none" stroke="#333" stroke-width="1"/></svg><svg style="left:1894px;top:539px;" width="25" height="20" viewBox="0 0 25 20"><rect x="1" y="1" width="9" height="8" fill="#333"/><path d="M4 1 V9 M7 1 V9 M1 4 H10 M1 6.5 H10" stroke="#fff" stroke-width="0.7"/><path d="M3 9 Q0.5 13 3 19" fill="none" stroke="#222" stroke-width="1.6"/><path d="M22 9 Q24.5 13 22 19" fill="none" stroke="#222" stroke-width="1.6"/><text x="12.5" y="17.5" font-size="11" font-style="italic" font-weight="bold" text-anchor="middle" fill="#222" font-family="Liberation Serif, serif">x</text></svg><svg style="left:1892px;top:580px;" width="27" height="25" viewBox="0 0 27 25"><rect x="1" y="1" width="24" height="23" rx="3" fill="#d8d8d8"/><path d="M3 9 L21 6 L24 17 L6 20 Z" fill="#333"/><circle cx="9" cy="13" r="3" fill="#7aa7e0"/><circle cx="17" cy="12" r="3" fill="#7aa7e0"/><path d="M8 3 V6 M12 3 V6 M16 3 V6" stroke="#556" stroke-width="1"/></svg><svg style="left:1892px;top:614px;" width="27" height="25" viewBox="0 0 27 25"><rect x="1" y="1" width="25" height="23" rx="3" fill="#e2efe2"/><rect x="3" y="3" width="21" height="19" rx="1.5" fill="#47a447"/><path d="M6 7 Q9 6 13 7.5 V19 Q9 17.5 6 18.5 Z M14 7.5 Q18 6 21 7 V18.5 Q18 17.5 14 19 Z" fill="#fff"/></svg><svg style="left:1892px;top:647px;" width="27" height="25" viewBox="0 0 27 25"><rect x="1" y="1" width="25" height="23" rx="3" fill="#dde"/><rect x="3" y="3" width="21" height="19" rx="1.5" fill="#1d4fb0" stroke="#111" stroke-width="1"/><path d="M6 7 Q9 6 13 7.5 V19 Q9 17.5 6 18.5 Z M14 7.5 Q18 6 21 7 V18.5 Q18 17.5 14 19 Z" fill="#fff"/></svg><div class="a" style="left:1815px;top:1019px;width:104px;height:31px;background:#fff;"></div><svg style="left:1821px;top:1029px;" width="18" height="14" viewBox="0 0 18 14"><rect x="1" y="7.3" width="11" height="5.3" fill="#fff" stroke="#333" stroke-width="1.3"/><path d="M3 12 V10.5 M5.5 12 V10.5 M8 12 V10.5 M10.5 12 V10.5" stroke="#555" stroke-width="0.8"/><path d="M6 5.5 Q6 1 11.5 1 Q17 1 17 5.5 V8.5 Q17 12.6 12 12.6" fill="#fff" stroke="#333" stroke-width="1.3"/><ellipse cx="11.5" cy="4.3" rx="3.3" ry="1.8" fill="none" stroke="#333" stroke-width="1.1"/></svg><svg style="left:1855px;top:1029px;" width="21" height="15" viewBox="0 0 21 15"><path d="M1 13.5 A9.5 10 0 0 1 20 13.5 Z" fill="#fff" stroke="#333" stroke-width="1.4"/><path d="M5 12.5 Q6 8 10.5 8 Q15 8 16 12.5" fill="none" stroke="#333" stroke-width="1.2"/><path d="M3.5 11 L5 11.3 M4.5 7 L6 8 M7.5 4 L8.3 5.3 M10.5 3 V4.5 M13.5 4 L12.7 5.3 M16.5 7 L15 8 M17.5 11 L16 11.3" stroke="#888" stroke-width="0.8"/></svg><svg style="left:1892px;top:1028px;" width="17" height="16" viewBox="0 0 17 16"><path d="M1.5 2.5 H15.5" stroke="#333" stroke-width="1.3"/><path d="M8.5 1 V13" stroke="#888" stroke-width="2.2"/><path d="M3 2.5 L1 8.5 H5 Z M14 2.5 L12 8.5 H16 Z" fill="none" stroke="#333" stroke-width="0.9"/><path d="M0.5 8.8 H5.5 M11.5 8.8 H16.5" stroke="#222" stroke-width="1.6"/><path d="M0.5 14.5 H16.5" stroke="#222" stroke-width="2"/></svg><div class="a" style="left:40px;top:1050px;width:33px;height:29px;background:#d0d0d0;"></div><svg style="left:49px;top:1056px;" width="16" height="16" viewBox="0 0 16 16"><path d="M8 1.5 V14.5 M1.5 8 H14.5" stroke="#555" stroke-width="2.6"/></svg><div class="a" style="left:73px;top:1050px;width:40px;height:29px;background:#e9e9e9;"></div><svg style="left:83px;top:1054px;" width="19" height="17" viewBox="0 0 19 17"><path d="M9.5 1 L18 8.5 H15.5 V16 H11.5 V11 H7.5 V16 H3.5 V8.5 H1 Z" fill="#666"/><rect x="14" y="2" width="2" height="4" fill="#666"/></svg><svg style="left:108px;top:1050px;" width="126" height="29" viewBox="0 0 126 29"><path d="M0 0 H116 L125 15 L116 30 H0 L8 15 Z" fill="#fff"/><path d="M0 0 L8 15 L0 30" fill="#e9e9e9"/></svg><div class="a" style="left:104px;top:1050px;width:6px;height:29px;background:#e9e9e9;"></div><svg style="left:108px;top:1050px;" width="10" height="29" viewBox="0 0 10 29"><path d="M0 0 L8.5 15 L0 30 Z" fill="#e9e9e9"/></svg><svg style="left:126px;top:1055px;" width="19" height="15" viewBox="0 0 19 15"><path d="M1 1.5 H7 L8.5 3.5 H17.5 V14 H1 Z" fill="none" stroke="#333" stroke-width="1.1"/></svg><div class="t" style="left:150.0px;top:1056.23px;font-size:14.50px;color:#555;font-weight:normal;font-style:normal;transform:scaleX(0.9380);transform-origin:0 0;">Exercise 3</div><div class="a" style="left:236px;top:1050px;width:202px;height:29px;background:#e9e9e9;"></div><svg style="left:233px;top:1050px;" width="12" height="29" viewBox="0 0 12 29"><path d="M0 0 L9 15 L0 30 Z" fill="#d6d6d6"/></svg><svg style="left:248px;top:1055px;" width="14" height="14" viewBox="0 0 14 14"><circle cx="7" cy="7" r="6.5" fill="#7da6db"/><rect x="5.8" y="2" width="2.4" height="3.5" fill="#fff"/><rect x="5.8" y="7.5" width="2.4" height="4.5" fill="#fff"/></svg><svg style="left:265px;top:1053px;" width="20" height="19" viewBox="0 0 20 19"><path d="M1.5 3.5 L5 1 H17.5 L18.5 2 V17.5 L15 18 H2.5 L1.5 17 Z" fill="#fff" stroke="#333" stroke-width="1.2"/><path d="M3 5 H14.5 V17" fill="none" stroke="#333" stroke-width="0.9"/><rect x="4.5" y="3.5" width="9.5" height="9.5" fill="#7a7a7a"/></svg><div class="t" style="left:289.0px;top:1057.23px;font-size:14.50px;color:#555;font-weight:normal;font-style:normal;transform:scaleX(0.9606);transform-origin:0 0;">Exercise 3 Assembly</div><div class="a" style="left:438px;top:1050px;width:200px;height:29px;background:#fff;"></div><div class="a" style="left:439px;top:1075px;width:198px;height:2.5px;background:#1b4589;border-radius:1px;"></div><svg style="left:449px;top:1054px;" width="19" height="18" viewBox="0 0 19 18"><path d="M1 5 L3 3.5 H6.5 V17 H1 Z M6.5 17 V5 M7.5 17 V2.5 L9.5 1 H17 L18 2.5 V17 Z M12 2.5 V17 M7.5 2.5 H16.5" fill="none" stroke="#333" stroke-width="1.1"/></svg><div class="t" style="left:471.6px;top:1056.43px;font-size:14.50px;color:#333;font-weight:normal;font-style:normal;transform:scaleX(0.9361);transform-origin:0 0;">Exercise 3 Part Studio</div></body></html>
